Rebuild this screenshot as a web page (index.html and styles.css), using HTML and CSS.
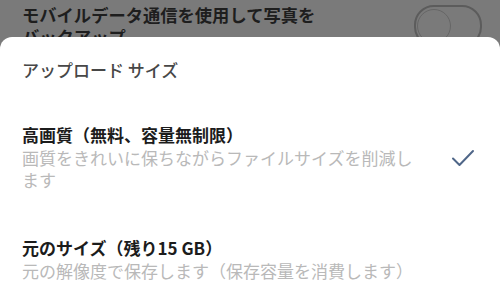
FILE: index.html
```html
<!DOCTYPE html>
<html lang="ja">
<head>
    <meta charset="UTF-8">
    <meta name="viewport" content="width=device-width, initial-scale=1.0">
    <title>アップロード サイズ</title>
    <link rel="stylesheet" href="styles.css">
</head>
<body>
    <div class="settings-row">
        <div class="settings-label">モバイルデータ通信を使用して写真をバックアップ</div>
        <div class="toggle"><span class="knob"></span></div>
    </div>

    <div class="sheet">
        <h2 class="sheet-title">アップロード サイズ</h2>

        <div class="option">
            <div class="option-text">
                <div class="option-name">高画質（無料、容量無制限）</div>
                <div class="option-desc">画質をきれいに保ちながらファイルサイズを削減します</div>
            </div>
            <svg class="check" width="24" height="18" viewBox="0 0 24 18">
                <path d="M2 9.5 L8.5 16 L22 2" fill="none" stroke="#4f6688" stroke-width="2" stroke-linecap="round" stroke-linejoin="round"/>
            </svg>
        </div>

        <div class="option">
            <div class="option-text">
                <div class="option-name">元のサイズ（残り15 GB）</div>
                <div class="option-desc">元の解像度で保存します（保存容量を消費します）</div>
            </div>
        </div>
    </div>
</body>
</html>
```

FILE: styles.css
```css
body{
    margin: 0;
    height: 301px;
    display: flex;
    flex-direction: column;
    background: #7a7a7a;
    font-family: "Noto Sans CJK JP", "Noto Sans", sans-serif;
    overflow: hidden;
}
.settings-row{
    height: 37px;
    flex-shrink: 0;
    overflow: hidden;
    display: flex;
    justify-content: space-between;
    align-items: flex-start;
    padding: 4px 18px 0 22px;
    box-sizing: border-box;
}
.settings-label{
    width: 305px;
    font-size: 17.3px;
    line-height: 22px;
    font-weight: 700;
    color: #1e1e1e;
}
.toggle{
    margin-top: 1px;
    width: 62px;
    height: 38px;
    border: 2px solid #5c5c5c;
    border-radius: 20px;
    display: flex;
    align-items: center;
    padding: 0 1px;
}
.toggle .knob{
    width: 34px;
    height: 34px;
    border-radius: 50%;
    border: 1.5px solid #666;
    box-sizing: border-box;
}
.sheet{
    flex: 1;
    background: #fff;
    border-radius: 12px 12px 0 0;
    padding: 22px 25px 0 22px;
}
.sheet-title{
    margin: 0;
    padding-bottom: 20px;
    font-size: 17px;
    line-height: 22px;
    font-weight: 500;
    color: #474747;
}
.option{
    display: flex;
    align-items: center;
    justify-content: space-between;
    padding: 21px 0 23px;
}
.option-text{
    width: 400px;
}
.option-name{
    font-size: 17px;
    line-height: 25px;
    font-weight: 700;
    color: #1c1c1c;
}
.option-desc{
    font-size: 17px;
    line-height: 22px;
    color: #b9b9b9;
}
.check{
    flex-shrink: 0;
    margin-top: 2px;
}
```
